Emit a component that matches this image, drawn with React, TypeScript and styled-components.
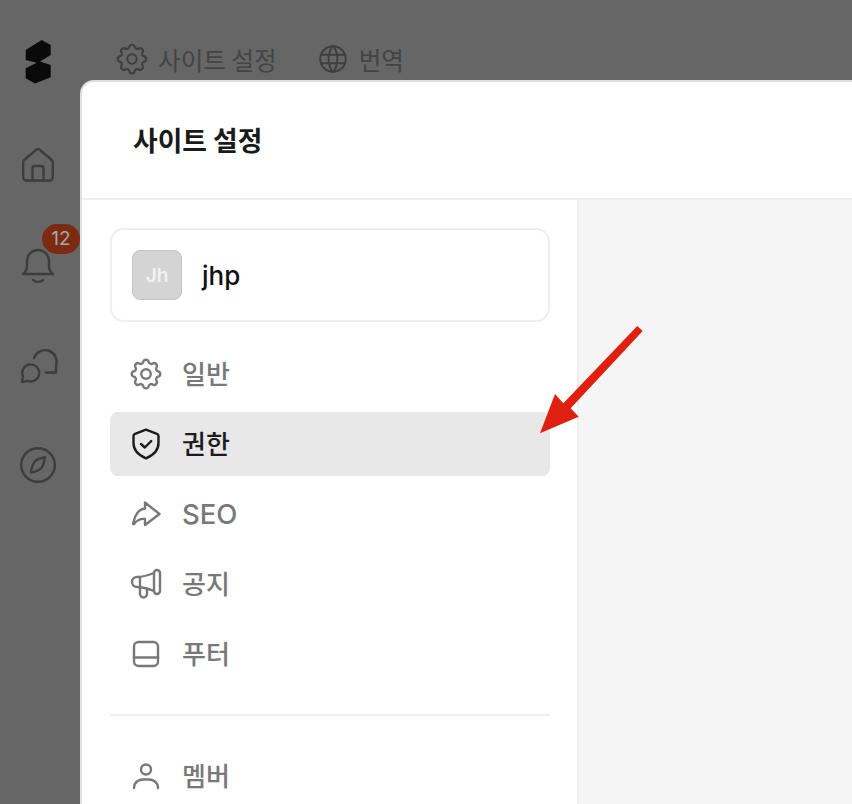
import React from "react";
import styled, { createGlobalStyle } from "styled-components";
import { TbSettings, TbWorld } from "react-icons/tb";

const Global = createGlobalStyle`
  html, body { margin: 0; padding: 0; width: 852px; height: 804px; overflow: hidden; }
  body { font-family: Inter, "Noto Sans CJK KR", sans-serif; background: #666666; }
`;

const Page = styled.div`
  position: relative; width: 852px; height: 804px; overflow: hidden; background: #666666;
  display: flex;
`;
const Rail = styled.nav`
  width: 76px; flex: none; display: flex; flex-direction: column; align-items: center; padding-top: 40px; box-sizing: border-box;
`;
const Logo = styled.svg`
  width: 27px; height: 44px; display: block; margin-bottom: 63px;
`;
const RailItem = styled.div`
  position: relative; width: 36px; height: 36px; margin-bottom: 64px; color: #3d3d3d;
  display: flex; align-items: center; justify-content: center; font-size: 36px;
`;
const Badge = styled.span`
  position: absolute; left: 22px; top: -23px; width: 38px; height: 30px; border-radius: 15px;
  background: #7c2a12; color: #a8a8a8; font-size: 19px; line-height: 30px; text-align: center;
`;
const TopBar = styled.header`
  display: flex; align-items: center; height: 36px; margin-top: 41px; margin-left: 40px; gap: 40px;
`;
const TopItem = styled.div`
  display: flex; align-items: center; gap: 10px; font-size: 24.6px; line-height: 36px;
  font-family: "Noto Sans CJK KR", sans-serif; color: #444444;
`;
const TopGear = styled(TbSettings)`
  font-size: 38px; margin: -3px -3px -3px -3px; stroke-width: 1.35; color: #3f3f3f;
`;
const TopGlobe = styled(TbWorld)`
  font-size: 34px; margin: -1px; stroke-width: 1.4; color: #3f3f3f;
`;
const Modal = styled.section`
  position: absolute; left: 80px; top: 80px; width: 900px; height: 800px; box-sizing: border-box; background: #fff;
  border-radius: 14px 0 0 0; border: 2px solid #e0e0e0; border-right: 0; border-bottom: 0;
  display: flex; flex-direction: column; overflow: hidden;
`;
const ModalHeader = styled.div`
  height: 118px; flex: none; display: flex; align-items: center; padding-left: 51px; padding-bottom: 2px; box-sizing: border-box; border-bottom: 2px solid #eeeeee;
`;
const Title = styled.h1`
  margin: 0; font-size: 26.8px; font-weight: 700; color: #1a1a1a; font-family: "Noto Sans CJK KR", sans-serif;
`;
const Body = styled.div`
  flex: 1; display: flex; min-height: 0;
`;
const Side = styled.aside`
  width: 497px; flex: none; box-sizing: border-box; padding: 28px 27px 0 28px; border-right: 2px solid #eeeeee; display: flex; flex-direction: column;
`;
const Content = styled.main`
  flex: 1; background: #f5f5f5;
`;
const Profile = styled.div`
  height: 94px; flex: none; box-sizing: border-box; border: 2px solid #eeeeee; border-radius: 14px; display: flex; align-items: center; padding-left: 20px; gap: 20px; margin-bottom: 20px;
`;
const Avatar = styled.div`
  width: 50px; height: 50px; box-sizing: border-box; border: 1px solid #c4c4c4; border-radius: 8px; background: #d4d4d4; color: #f2f2f2;
  display: flex; align-items: center; justify-content: center; font-size: 19px; font-weight: 600;
`;
const Name = styled.span`
  font-size: 26px; color: #111; font-weight: 500;
`;
const NavList = styled.div`
  display: flex; flex-direction: column; gap: 6px;
`;
const NavRow = styled.div<{ $active?: boolean }>`
  height: 64px; flex: none; border-radius: 8px; display: flex; align-items: center; gap: 20px; padding-left: 20px;
  background: ${(p) => (p.$active ? "#e8e8e8" : "transparent")};
  color: ${(p) => (p.$active ? "#1c1c1c" : "#787878")};
`;
const NavLabel = styled.span<{ $latin?: boolean }>`
  font-family: Inter, "Noto Sans CJK KR", sans-serif; font-weight: 500;
  font-size: ${(p) => (p.$latin ? "27.5px" : "26px")};
  padding-bottom: ${(p) => (p.$latin ? "0" : "4px")};
`;
const Divider = styled.hr`
  border: 0; height: 2px; background: #f0f0f0; margin: 28px 0 28px; width: 100%; flex: none;
`;
const Arrow = styled.svg`
  position: absolute; left: 530px; top: 320px; width: 120px; height: 120px; pointer-events: none;
`;
const Ico = styled.svg<{ $size?: number }>`
  width: ${(p) => p.$size ?? 32}px; height: ${(p) => p.$size ?? 32}px; flex: none; overflow: visible;
  fill: none; stroke: currentColor; stroke-width: 2.4; stroke-linecap: round; stroke-linejoin: round;
`;
const RowGear = styled(TbSettings)`
  font-size: 38px; margin: -3px; stroke-width: 1.5; flex: none;
`;

const Shield = () => (
  <Ico viewBox="0 0 32 32">
    <path d="M16 1.700 L27 5.800 a2.200 2.200 0 0 1 1.500 2.100 V15 C28.500 23 22 27.800 16 30.300 C10 27.800 3.500 23 3.500 15 V7.900 a2.200 2.200 0 0 1 1.500-2.100 Z" />
    <path d="M11 16 l3.800 3.500 l6.500-6.500" />
  </Ico>
);
const Share = () => (
  <Ico viewBox="0 0 32 32">
    <path d="M15 4.500 L29.500 16 L15 27 V21 C10.500 20.500 7 22 4 26 C3 27 3 25 3.500 24 C5 17 9 11 15 10.500 Z" />
  </Ico>
);
const Megaphone = () => (
  <Ico viewBox="0 0 32 32">
    <path d="M24 5 C15 8.500 11 9 7 9 A5 5 0 0 0 7 19 C11 19 15 19.500 24 23" />
    <path d="M24 5 a3 3 0 0 1 6 0 V23 a3 3 0 0 1 -6 0 Z" />
    <path d="M10 9 V19" />
    <path d="M10 19 V26 a3.500 3.500 0 0 0 7 0 V20.500" />
  </Ico>
);
const Footer = () => (
  <Ico viewBox="0 0 32 32">
    <rect x="4" y="4" width="24" height="24" rx="4.500" />
    <path d="M4 19.500 H28" />
  </Ico>
);
const User = () => (
  <Ico viewBox="0 0 32 32">
    <circle cx="16" cy="9.500" r="5" />
    <path d="M4 28 C4 22 9 19.500 13 19.500 H19 C23 19.500 28 22 28 28" />
  </Ico>
);

const nav = [
  { label: "일반", icon: <RowGear /> },
  { label: "권한", icon: <Shield />, active: true },
  { label: "SEO", icon: <Share />, latin: true },
  { label: "공지", icon: <Megaphone /> },
  { label: "푸터", icon: <Footer /> },
];

export default function App() {
  return (
    <Page>
      <Global />
      <Rail>
        <Logo viewBox="0 0 27 44">
          <path fill="#0a0a0a" d="M16.700 0 L25.700 5 V15 L15 21.500 L25.700 25 V37.300 L10 43.600 L.7 38.300 V28.300 L11.700 22.700 L.7 20 V10 Z" />
        </Logo>
        <RailItem>
          <Ico $size={36} viewBox="0 0 36 36">
            <path d="M3.200 15.200 a3 3 0 0 1 1-2.200 L16 3 a3 3 0 0 1 4 0 L31.800 13 a3 3 0 0 1 1 2.200 V30.500 a3 3 0 0 1 -3 3 H6.200 a3 3 0 0 1 -3-3 Z" />
            <path d="M12.500 33.500 V21 a2 2 0 0 1 2-2 h7 a2 2 0 0 1 2 2 V33.500" />
          </Ico>
        </RailItem>
        <RailItem>
          <Ico $size={36} viewBox="0 0 36 36">
            <path d="M3 27 H33 C30 25 29 22 29 19 V14 A11 11 0 0 0 7 14 V19 C7 22 6 25 3 27 Z" />
            <path d="M13 33 C15 35.500 21 35.500 23 33" />
          </Ico>
          <Badge>12</Badge>
        </RailItem>
        <RailItem>
          <Ico $size={36} viewBox="0 0 36 36">
            <path d="M14 11 A11.500 11.500 0 1 1 36 18.500 L36 25.500 L26 25.500" />
            <path d="M2 35 L3 29.500 A8.500 8.500 0 1 1 7.500 33.800 Z" />
          </Ico>
        </RailItem>
        <RailItem>
          <Ico $size={36} viewBox="0 0 36 36">
            <circle cx="18" cy="18" r="16.800" />
            <path d="M25 10.300 Q23.500 18.500 21.500 21 Q18 24.500 11 25.500 Q12 17.500 15 14.500 Q18 11.500 25 10.300 Z" />
          </Ico>
        </RailItem>
      </Rail>
      <TopBar>
        <TopItem><TopGear />사이트 설정</TopItem>
        <TopItem><TopGlobe />번역</TopItem>
      </TopBar>
      <Modal>
        <ModalHeader><Title>사이트 설정</Title></ModalHeader>
        <Body>
          <Side>
            <Profile><Avatar>Jh</Avatar><Name>jhp</Name></Profile>
            <NavList>
              {nav.map((n) => (
                <NavRow key={n.label} $active={n.active}>{n.icon}<NavLabel $latin={n.latin}>{n.label}</NavLabel></NavRow>
              ))}
            </NavList>
            <Divider />
            <NavRow><User /><NavLabel>멤버</NavLabel></NavRow>
          </Side>
          <Content />
        </Body>
      </Modal>
      <Arrow viewBox="530 320 120 120">
        <path fill="#e0200f" d="M637.300 326 L642.700 331 L570.700 408.300 L578.700 416.700 L540 433.300 L555 394 L563.300 403.300 Z" />
      </Arrow>
    </Page>
  );
}
